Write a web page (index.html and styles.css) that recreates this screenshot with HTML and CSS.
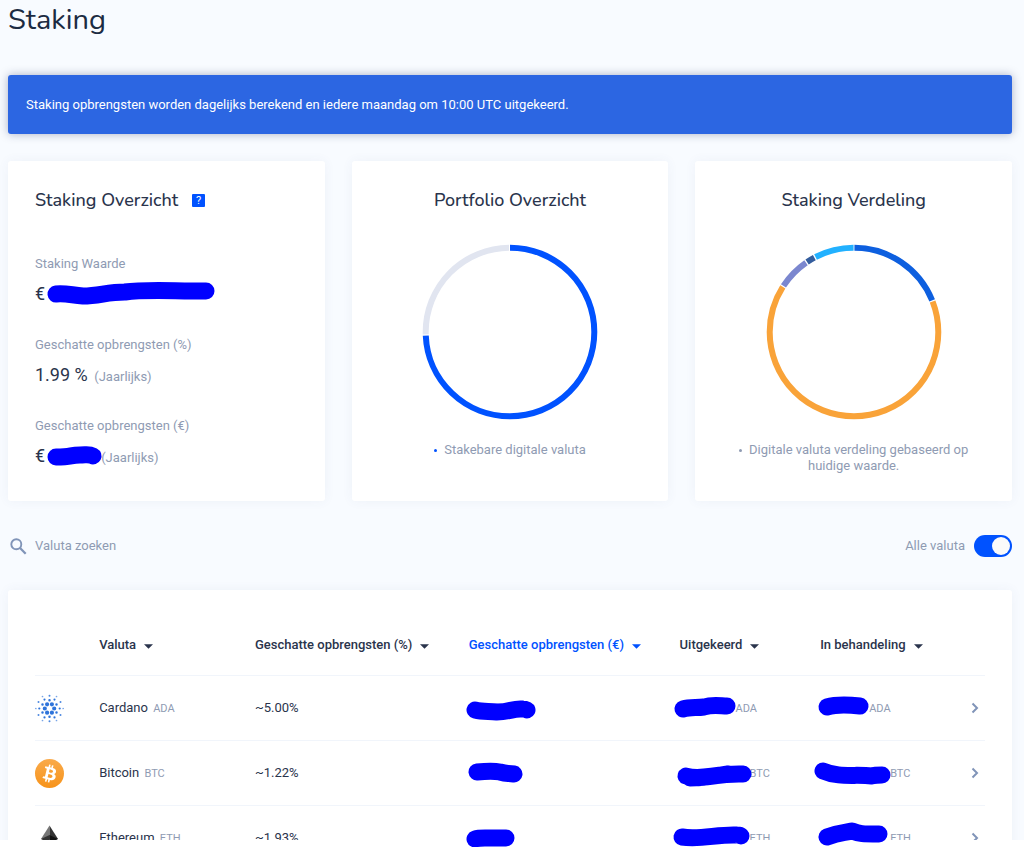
FILE: index.html
```
<!DOCTYPE html>
<html lang="nl">
<head>
<meta charset="utf-8">
<meta name="viewport" content="width=device-width, initial-scale=1">
<title>Staking</title>
<link rel="stylesheet" href="styles.css">
</head>
<body>
<svg class="defs" aria-hidden="true">
  <symbol id="caret" viewBox="0 0 9 5"><path d="M0 .3h9L4.500 4.700z" fill="currentColor"/></symbol>
  <symbol id="chevron" viewBox="0 0 8 12"><path d="M1.500 1.500 6 6l-4.500 4.500" fill="none" stroke="currentColor" stroke-width="2"/></symbol>
</svg>
<main class="page">
  <h1 class="page-title">Staking</h1>
  <p class="banner">Staking opbrengsten worden dagelijks berekend en iedere maandag om 10:00 UTC uitgekeerd.</p>

  <div class="cards">
    <section class="card">
      <div class="card-head">
        <h2 class="card-title">Staking Overzicht</h2>
        <button class="help" type="button" aria-label="Uitleg">?</button>
      </div>
      <dl class="stats">
        <div class="stat">
          <dt>Staking Waarde</dt>
          <dd>€<svg class="mark" aria-hidden="true"><path d="M21 11C30 10 36 12 48 13C64 13 72 9 90 9C110 6 135 8 171 8"/></svg></dd>
        </div>
        <div class="stat">
          <dt>Geschatte opbrengsten (%)</dt>
          <dd>1.99 % <small>(Jaarlijks)</small></dd>
        </div>
        <div class="stat">
          <dt>Geschatte opbrengsten (€)</dt>
          <dd>€<small class="after-mark">(Jaarlijks)</small><svg class="mark" aria-hidden="true"><path d="M21 12C38 12 34 10 45 10C52 10 54 9 58 11"/></svg></dd>
        </div>
      </dl>
    </section>

    <section class="card card-center">
      <h2 class="card-title">Portfolio Overzicht</h2>
      <svg class="donut" viewBox="0 0 176 176" role="img" aria-label="Stakebare digitale valuta">
        <g transform="rotate(-90 88 88)">
          <circle class="arc" cx="88" cy="88" r="84.300" pathLength="360" stroke="#0052ff" stroke-dasharray="267.500 92.500"/>
          <circle class="arc" cx="88" cy="88" r="84.300" pathLength="360" stroke="#e1e5f0" stroke-dasharray="91 269" stroke-dashoffset="-268.300"/>
        </g>
      </svg>
      <p class="legend"><span class="dot dot-blue"></span>Stakebare digitale valuta</p>
    </section>

    <section class="card card-center">
      <h2 class="card-title">Staking Verdeling</h2>
      <svg class="donut" viewBox="0 0 176 176" role="img" aria-label="Staking verdeling">
        <g transform="rotate(-90 88 88)">
          <circle class="arc" cx="88" cy="88" r="84.300" pathLength="360" stroke="#0d5fdf" stroke-dasharray="67.700 292.300" stroke-dashoffset="-.3"/>
          <circle class="arc" cx="88" cy="88" r="84.300" pathLength="360" stroke="#f9a339" stroke-dasharray="233.600 126.400" stroke-dashoffset="-68.800"/>
          <circle class="arc" cx="88" cy="88" r="84.300" pathLength="360" stroke="#7b87cf" stroke-dasharray="22.100 337.900" stroke-dashoffset="-303.200"/>
          <circle class="arc" cx="88" cy="88" r="84.300" pathLength="360" stroke="#345d9d" stroke-dasharray="5.700 354.300" stroke-dashoffset="-326.200"/>
          <circle class="arc" cx="88" cy="88" r="84.300" pathLength="360" stroke="#22b1ff" stroke-dasharray="26.900 333.100" stroke-dashoffset="-332.800"/>
        </g>
      </svg>
      <p class="legend"><span class="dot"></span>Digitale valuta verdeling gebaseerd op huidige waarde.</p>
    </section>
  </div>

  <div class="toolbar">
    <label class="search">
      <svg class="search-icon" viewBox="0 0 17 17" aria-hidden="true"><circle cx="6.300" cy="6.300" r="5" fill="none" stroke="currentColor" stroke-width="1.900"/><path d="M10 10l5.700 5.700" stroke="currentColor" stroke-width="2.300"/></svg>
      <input type="text" placeholder="Valuta zoeken" aria-label="Valuta zoeken">
    </label>
    <label class="switch">Alle valuta <input type="checkbox" checked></label>
  </div>

  <section class="card table-card">
    <table class="coins">
      <colgroup><col class="c-icon"><col class="c-name"><col class="c-rate"><col class="c-euro"><col class="c-paid"><col class="c-open"><col class="c-more"></colgroup>
      <thead>
        <tr>
          <th></th>
          <th><button class="sort" type="button">Valuta<svg class="caret"><use href="#caret"/></svg></button></th>
          <th><button class="sort" type="button">Geschatte opbrengsten (%)<svg class="caret"><use href="#caret"/></svg></button></th>
          <th><button class="sort sort-active" type="button">Geschatte opbrengsten (€)<svg class="caret"><use href="#caret"/></svg></button></th>
          <th><button class="sort" type="button">Uitgekeerd<svg class="caret"><use href="#caret"/></svg></button></th>
          <th><button class="sort" type="button">In behandeling<svg class="caret"><use href="#caret"/></svg></button></th>
          <th></th>
        </tr>
      </thead>
      <tbody>
        <tr>
          <td><svg class="coin" viewBox="-14.500 -14.500 29 29" aria-hidden="true"><g fill="none" stroke="#2f74da" stroke-linecap="round">
            <g stroke-width="4.200"><path d="M-2.400-4.200h0M2.400-4.200h0M-4.700 0h0M4.700 0h0M-2.400 4.200h0M2.400 4.200h0"/></g>
            <g stroke-width="2.500"><path d="M0-8.200h0M0 8.200h0M7-4h0M7 4h0M-7-4h0M-7 4h0"/></g>
            <g stroke-width="2.200"><path d="M5-8.900h0M-5-8.900h0M5 8.900h0M-5 8.900h0M10.200 0h0M-10.200 0h0"/></g>
            <g stroke-width="2" opacity=".85"><path d="M0-12.800h0M0 12.800h0M11-6.500h0M11 6.500h0M-11-6.500h0M-11 6.500h0"/></g>
            <g stroke-width="1.700" opacity=".65"><path d="M7-12h0M-7-12h0M7 12h0M-7 12h0M13.700 0h0M-13.700 0h0"/></g>
          </g></svg></td>
          <td>Cardano <small class="ticker">ADA</small></td>
          <td>~5.00%</td>
          <td><span class="value">&nbsp;<svg class="mark" aria-hidden="true"><path d="M6 10C14 12 20 11 28 12C42 12 43 8 54 9Q56 9 58 10"/></svg></span></td>
          <td><span class="value value-s"><small>ADA</small><svg class="mark" aria-hidden="true"><path d="M3 9C10 7 16 8 24 7C33 4 41 6 47 6"/></svg></span></td>
          <td><span class="value value-xs"><small>ADA</small><svg class="mark" aria-hidden="true"><path d="M7 7C17 4 31 5 40 6"/></svg></span></td>
          <td><button class="more" type="button" aria-label="Cardano openen"><svg><use href="#chevron"/></svg></button></td>
        </tr>
        <tr>
          <td><svg class="coin" viewBox="0 0 32 32" aria-hidden="true"><defs><linearGradient id="btc" x2="0" y2="1"><stop stop-color="#f9aa4b"/><stop offset="1" stop-color="#f7931a"/></linearGradient></defs><circle cx="16" cy="16" r="16" fill="url(#btc)"/><path fill="#fff" d="M23.189 14.020c.314-2.096-1.283-3.223-3.465-3.975l.708-2.840-1.728-.43-.69 2.765c-.454-.114-.92-.22-1.385-.326l.695-2.783L15.596 6l-.708 2.839c-.376-.086-.746-.17-1.104-.26l.002-.009-2.384-.595-.46 1.846s1.283.294 1.256.312c.7.175.826.638.805 1.006l-.806 3.235c.048.012.11.030.18.057l-.183-.045-1.130 4.532c-.086.212-.303.531-.793.410.018.025-1.256-.313-1.256-.313l-.858 1.978 2.250.561c.418.105.828.215 1.231.318l-.715 2.872 1.727.43.708-2.840c.472.127.930.245 1.378.357l-.706 2.828 1.728.43.715-2.866c2.948.558 5.164.333 6.097-2.333.752-2.146-.037-3.385-1.588-4.192 1.130-.260 1.980-1.003 2.207-2.538zm-3.950 5.538c-.533 2.147-4.148.986-5.320.695l.950-3.805c1.172.293 4.929.872 4.370 3.110zm.535-5.569c-.487 1.953-3.495.960-4.470.717l.860-3.450c.975.243 4.118.696 3.610 2.733z"/></svg></td>
          <td>Bitcoin <small class="ticker">BTC</small></td>
          <td>~1.22%</td>
          <td><span class="value">&nbsp;<svg class="mark" aria-hidden="true"><path d="M8 7C18 6 26 6 31 7C38 9 38 8 45 9"/></svg></span></td>
          <td><span class="value value-l"><small>BTC</small><svg class="mark" aria-hidden="true"><path d="M6 11C22 16 34 8 63 9M10 13C24 13 34 11 48 9"/></svg></span></td>
          <td><span class="value value-l"><small>BTC</small><svg class="mark" aria-hidden="true"><path d="M3 6C19 13 35 9 52 11Q55 10 62 10"/></svg></span></td>
          <td><button class="more" type="button" aria-label="Bitcoin openen"><svg><use href="#chevron"/></svg></button></td>
        </tr>
        <tr>
          <td><svg class="coin" viewBox="0 0 29 29" aria-hidden="true"><path d="M14.500 1.500v14L6 15z" fill="#777"/><path d="M14.500 1.500v14L23 15z" fill="#333"/><path d="M14.500 11v8.500L6 15z" fill="#333"/><path d="M14.500 11v8.500L23 15z" fill="#111"/><path d="M6 17l8.500 10v-5z" fill="#777"/><path d="M23 17l-8.500 10v-5z" fill="#333"/></svg></td>
          <td>Ethereum <small class="ticker">ETH</small></td>
          <td>~1.93%</td>
          <td><span class="value">&nbsp;<svg class="mark" aria-hidden="true"><path d="M6 9Q9 8 16 8H37"/></svg></span></td>
          <td><span class="value value-l"><small>ETH</small><svg class="mark" aria-hidden="true"><path d="M2 7C20 10 38 4 57 5Q60 5 61 6"/></svg></span></td>
          <td><span class="value value-l"><small>ETH</small><svg class="mark" aria-hidden="true"><path d="M7 7C20 2 25 3 32 1C40 4 42 4 59 4"/></svg></span></td>
          <td><button class="more" type="button" aria-label="Ethereum openen"><svg><use href="#chevron"/></svg></button></td>
        </tr>
      </tbody>
    </table>
  </section>
</main>
<div class="bottom-edge"></div>
</body>
</html>
```

FILE: styles.css
```
* { box-sizing: border-box; }
html { background: #f8fbff; }
body {
  margin: 0;
  height: 100vh;
  overflow: hidden;
  background: #f8fbff;
  color: #2a344c;
  font: 13px/16px Roboto, "Liberation Sans", sans-serif;
}
h1, h2, p, dl, dd { margin: 0; }
button, input { font: inherit; color: inherit; }
button { padding: 0; border: 0; background: none; cursor: pointer; }
.defs { display: none; }

.page { padding: 0 12px 0 8px; }
.page-title {
  margin-bottom: 35px;
  font: 400 29px/40px Nunito, "Open Sans", sans-serif;
  color: #1c2b42;
}
.banner {
  margin-bottom: 27px;
  padding: 20px 18px;
  border-radius: 3px;
  background: #2c66e2;
  box-shadow: 0 0 10px rgba(30, 40, 90, .35);
  color: #fff;
  line-height: 19px;
}

.cards { display: grid; grid-template-columns: repeat(3, 1fr); gap: 27px; }
.card {
  padding: 27px;
  border-radius: 3px;
  background: #fff;
  box-shadow: 0 0 12px rgba(60, 90, 140, .06);
}
.card-center { display: flex; flex-direction: column; align-items: center; text-align: center; }
.card-head { display: flex; align-items: center; gap: 14px; }
.card-title { font: 500 18px/24px Nunito, "Open Sans", sans-serif; }
.help {
  width: 13px;
  height: 13px;
  border-radius: 1px;
  background: #0052ff;
  color: #fff;
  font-size: 11px;
  line-height: 13px;
}
.stats { display: flex; flex-direction: column; gap: 31px; margin-top: 44px; }
.stat { display: flex; flex-direction: column; gap: 10px; }
.stat dt { color: #8f9bb3; }
.stat dd { position: relative; font-size: 18px; line-height: 24px; }
.stat small { margin-left: 2px; font-size: 13px; line-height: 1; color: #8f9bb3; }
.stat .after-mark { margin-left: 56px; }

.donut { width: 176px; margin: 32px 0 22px; }
.arc { fill: none; stroke-width: 6; }
.legend { color: #8f9bb3; }
.dot {
  display: inline-block;
  width: 3px;
  height: 3px;
  margin-right: 7px;
  border-radius: 50%;
  background: #8f9bb3;
  vertical-align: middle;
}
.dot-blue { background: #0052ff; }

.toolbar {
  display: flex;
  align-items: center;
  justify-content: space-between;
  margin: 34px 0 33px;
  color: #8f9bb3;
}
.search { display: flex; align-items: center; gap: 8px; padding-left: 2px; }
.search-icon { width: 17px; height: 17px; color: #8094b8; }
.search input { width: 200px; padding: 0; border: 0; outline: 0; background: none; }
.search input::placeholder { color: #8f9bb3; opacity: 1; }
.switch { display: flex; align-items: center; gap: 9px; }
.switch input {
  appearance: none;
  display: flex;
  width: 38px;
  height: 22px;
  margin: 0;
  padding: 2px;
  border-radius: 11px;
  background: #b9c3d6;
}
.switch input::before { content: ""; width: 18px; height: 18px; border-radius: 50%; background: #fafafa; }
.switch input:checked { justify-content: flex-end; background: #0052ff; }

.coins { width: 100%; table-layout: fixed; border-collapse: collapse; }
.c-icon { width: 6.75%; }
.c-name { width: 16.4%; }
.c-rate { width: 22.5%; }
.c-euro { width: 22.2%; }
.c-paid { width: 14.8%; }
.c-open { width: 14%; }
.coins th, .coins td { height: 65px; padding: 1px 0 0; border-top: 1px solid #f1f5fb; text-align: left; vertical-align: middle; }
.coins th { height: 58px; padding: 0 0 2px; border-top: 0; font-weight: 500; }
.coins small { font-size: 11px; color: #8f9bb3; }
.coins .ticker { margin-left: 2px; }
.sort { display: flex; align-items: center; gap: 8px; white-space: nowrap; }
.sort-active { color: #0052ff; }
.caret { width: 9px; height: 5px; margin-top: 3px; }
.coin { display: block; width: 29px; height: 29px; }
.value { position: relative; display: block; }
.value-xs { padding-left: 49px; }
.value-s { padding-left: 56px; }
.value-l { padding-left: 70px; }
.more { display: block; margin: 0 6px 0 auto; color: #8094b8; }
.more svg { display: block; width: 8px; height: 12px; }

/* Strokes that hide private amounts */
.mark { position: absolute; top: 0; left: 0; z-index: 2; width: 1px; height: 1px; overflow: visible; }
.mark path { fill: none; stroke: #00f; stroke-width: 17; stroke-linecap: round; stroke-linejoin: round; }
.stat .mark { top: 1px; }

.bottom-edge { position: fixed; inset: auto 0 0; z-index: 1; height: 7px; background: #fff; }
```
